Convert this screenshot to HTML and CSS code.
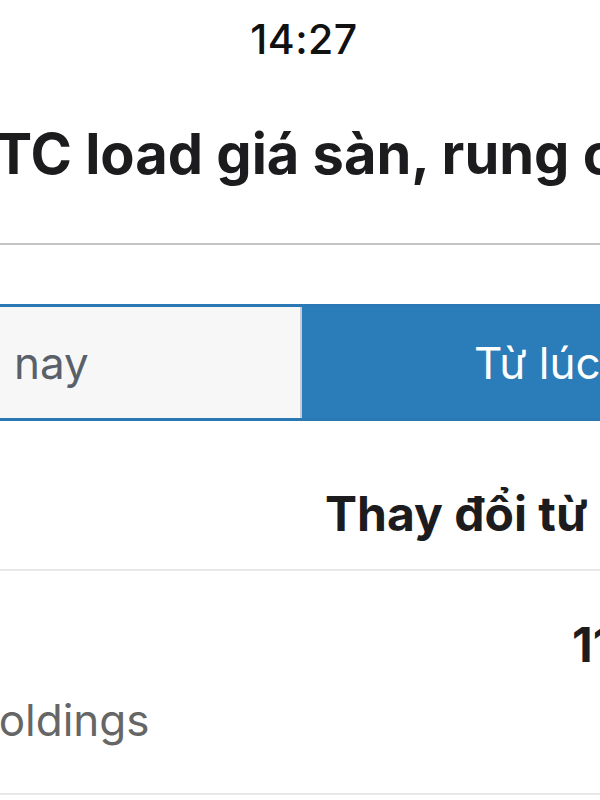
FILE: index.html
```html
<!DOCTYPE html>
<html lang="vi">
<head>
    <meta charset="UTF-8">
    <meta name="viewport" content="width=device-width, initial-scale=1.0">
    <title>Thay đổi giá</title>
    <link rel="stylesheet" href="styles.css">
</head>
<body>
    <div class="screen">
        <div class="status-bar">14:27</div>

        <div class="nav-title">
            <h1>HTC load giá sàn, rung chuyển</h1>
        </div>

        <div class="segment">
            <div class="segment-item"><span class="segment-label first">Hôm nay</span></div>
            <div class="segment-item active"><span class="segment-label">Từ lúc mở cửa</span></div>
        </div>

        <div class="table-head">
            <div class="col-name"></div>
            <div class="col-change">Thay đổi từ đầu</div>
        </div>

        <div class="table-row">
            <div class="col-name">
                <div class="ticker">&nbsp;</div>
                <div class="company">Holdings</div>
            </div>
            <div class="col-change">
                <div class="value">11,2%</div>
            </div>
        </div>
    </div>
</body>
</html>
```

FILE: styles.css
```css
body {
    margin: 0;
    background: #fff;
    font-family: Inter, "Noto Sans", sans-serif;
    color: #1c1c1e;
}
.screen {
    width: 600px;
    height: 800px;
    overflow: hidden;
}
.status-bar {
    height: 74px;
    padding: 14px 0 0 8px;
    box-sizing: border-box;
    text-align: center;
    font-size: 41px;
    font-weight: 500;
    letter-spacing: 0.5px;
    color: #111;
}
.nav-title {
    height: 169px;
    border-bottom: 2px solid #c4c4c4;
    white-space: nowrap;
}
.nav-title h1 {
    margin: 0 0 0 -47px;
    padding-top: 46px;
    font-size: 56px;
    font-weight: 700;
    line-height: 68px;
}
.segment {
    display: flex;
    margin-top: 59px;
    height: 111px;
    border-top: 3px solid #2a78b4;
    border-bottom: 3px solid #2a78b4;
    white-space: nowrap;
    overflow: hidden;
}
.segment-item {
    width: 300px;
    flex: none;
    display: flex;
    align-items: center;
    font-size: 44px;
    background: #f7f7f7;
    color: #59606a;
    border-right: 2px solid #c9ccd6;
}
.segment-label.first {
    margin-left: -96px;
}
.segment-item.active {
    flex: 1;
    background: #2a7db8;
    color: #fff;
    border-right: none;
    padding-left: 172px;
}
.table-head,
.table-row {
    display: flex;
    white-space: nowrap;
}
.table-head {
    height: 148px;
    border-bottom: 2px solid #e8e8e8;
    align-items: center;
    font-size: 48px;
    font-weight: 700;
}
.col-name {
    width: 325px;
    flex: none;
}
.col-change {
    flex: 1;
    overflow: hidden;
}
.table-head .col-change {
    padding-top: 36px;
}
.table-row {
    height: 222px;
    border-bottom: 2px solid #e8e8e8;
}
.ticker {
    height: 122px;
}
.company {
    margin-left: -34px;
    font-size: 44px;
    color: #666;
}
.value {
    padding-top: 44px;
    padding-left: 247px;
    font-size: 48px;
    font-weight: 700;
}
```
